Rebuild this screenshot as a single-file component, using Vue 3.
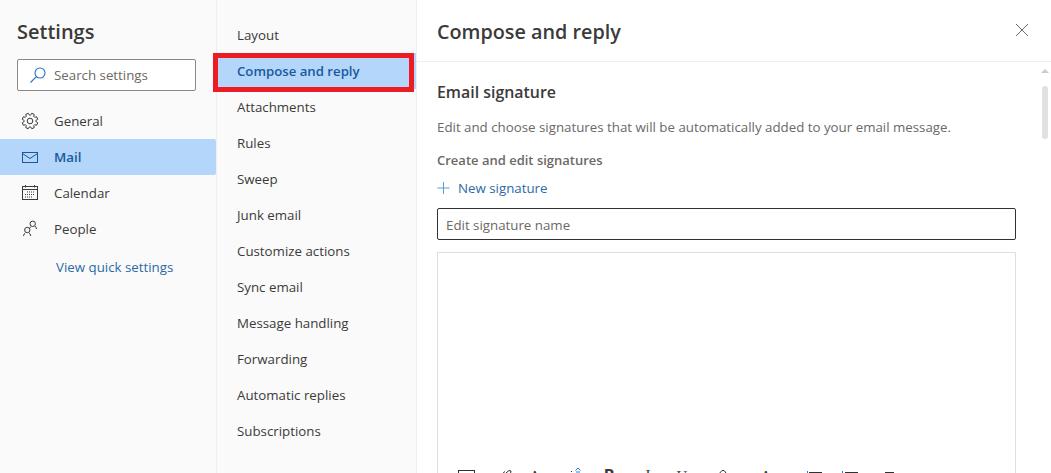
<script setup>
const mainNav = [
  { label: 'General', icon: 'gear' },
  { label: 'Mail', icon: 'mail', active: true },
  { label: 'Calendar', icon: 'calendar' },
  { label: 'People', icon: 'people' },
]
const subNav = ['Layout','Compose and reply','Attachments','Rules','Sweep','Junk email','Customize actions','Sync email','Message handling','Forwarding','Automatic replies','Subscriptions']

const gearPoints = (() => {
  const pts = []
  for (let i = 0; i < 8; i++) {
    const a = (i * Math.PI) / 4 + Math.PI / 8
    for (const [r, d] of [[5.9, -0.3], [7.9, -0.17], [7.9, 0.17], [5.9, 0.3]]) {
      pts.push(`${(9 + r * Math.cos(a + d)).toFixed(2)},${(9 + r * Math.sin(a + d)).toFixed(2)}`)
    }
  }
  return pts.join(' ')
})()
</script>

<template>
  <div class="app">
    <aside class="left">
      <h1 class="title">Settings</h1>
      <div class="search">
        <svg class="search-icon" width="16" height="16" viewBox="0 0 16 16" fill="none" stroke="#1f74c4" stroke-width="1.100">
          <circle cx="10" cy="6" r="5"/><path d="M6.400 9.600.500 15.500"/>
        </svg>
        <span>Search settings</span>
      </div>
      <nav>
        <div v-for="item in mainNav" :key="item.label" class="main-item" :class="{ active: item.active }">
          <svg class="main-icon" width="18" height="18" viewBox="0 0 18 18" fill="none" stroke="currentColor" stroke-width="1">
            <template v-if="item.icon === 'gear'">
              <circle cx="9" cy="9" r="2.800"/>
              <polygon :points="gearPoints"/>
            </template>
            <template v-else-if="item.icon === 'mail'">
              <rect x="1.500" y="4.500" width="15" height="10"/><path d="m1.500 5.500 7.500 5 7.500-5"/>
            </template>
            <template v-else-if="item.icon === 'calendar'">
              <rect x="1.500" y="2.500" width="15" height="13"/><path d="M1.500 5.500h15M4.500 1v2.500M13.500 1v2.500"/>
              <path d="M6 8h8M4 10.500h10M4 13h8" stroke-dasharray="1 1"/>
            </template>
            <template v-else>
              <circle cx="11.700" cy="3.800" r="2.700"/><circle cx="6.300" cy="10" r="2.700"/>
              <path d="M2.500 16c.2-1.500.8-2.600 1.900-3.200M9.800 16c-.2-1.500-.8-2.600-1.900-3.200M8.600 8.200l1.300-1.600M14 6c.8.600 1.300 1.600 1.500 3"/>
            </template>
          </svg>
          <span>{{ item.label }}</span>
        </div>
      </nav>
      <a class="quick">View quick settings</a>
    </aside>

    <nav class="middle">
      <div v-for="label in subNav" :key="label" class="sub-item" :class="{ selected: label === 'Compose and reply' }">
        {{ label }}
        <span v-if="label === 'Compose and reply'" class="marker"></span>
      </div>
    </nav>

    <main class="panel">
      <header class="panel-head">
        <h2>Compose and reply</h2>
        <svg width="12" height="12" viewBox="0 0 12 12" stroke="#6b6966" stroke-width="1" fill="none"><path d="m0 0 12 12M12 0 0 12"/></svg>
      </header>
      <section class="body">
        <h3>Email signature</h3>
        <p class="desc">Edit and choose signatures that will be automatically added to your email message.</p>
        <h4>Create and edit signatures</h4>
        <div class="new-sig">
          <svg width="14" height="14" viewBox="0 0 14 14" stroke="#5a9bd8" stroke-width="1" fill="none"><path d="M6.500 1v12M.500 7h12"/></svg>
          <span>New signature</span>
        </div>
        <div class="name-input">Edit signature name</div>
        <div class="editor">
          <div class="toolbar">
            <svg width="18" height="18" viewBox="0 0 18 18" fill="none" stroke="#323130"><rect x=".500" y="3.500" width="16" height="12"/></svg>
            <svg class="t1" width="18" height="18" viewBox="0 0 18 18" fill="none" stroke="#323130"><path d="m6 7 3-2.500M10 6l3-2.500 2 .500-.500 2.500-3 2"/></svg>
            <span class="tool-glyph t2">A</span>
            <svg class="t3" width="18" height="18" viewBox="0 0 18 18" fill="none" stroke="#2b7cd3"><path d="M7.500 3.500 10 1l2.500 2.500M8 5h4"/><path d="M3 4.500h1" stroke="#323130"/></svg>
            <b class="tool-glyph t4">B</b>
            <i class="tool-glyph t5">I</i>
            <span class="tool-glyph t6">U</span>
            <svg class="t7" width="18" height="18" viewBox="0 0 18 18" fill="none" stroke="#323130"><path d="M5 8 9 3.500h2L13 6"/></svg>
            <span class="tool-glyph t8">A</span>
            <svg class="t9" width="18" height="18" viewBox="0 0 18 18" fill="none"><path d="M4 5.500h13" stroke="#323130"/><path d="M2.500 4v2" stroke="#2b7cd3"/></svg>
            <svg class="t10" width="18" height="18" viewBox="0 0 18 18" fill="none"><path d="M4 5.500h13" stroke="#323130"/><path d="M1.500 4v2" stroke="#2b7cd3"/></svg>
            <svg class="t11" width="18" height="18" viewBox="0 0 18 18" fill="none"><path d="M5 5.500h9" stroke="#323130"/></svg>
          </div>
        </div>
      </section>
      <div class="scrollbar">
        <span class="arrow"></span>
        <span class="thumb"></span>
      </div>
    </main>
  </div>
</template>

<style>
html, body { margin: 0; overflow: hidden; background: #fff; }
</style>

<style scoped>
.app {
  display: flex;
  height: 473px;
  width: 1051px;
  overflow: hidden;
  font-family: "Open Sans", "Noto Sans", sans-serif;
  font-size: 13.300px;
  color: #3b3a39;
}
.left {
  flex: none;
  background: #fafafa;
  box-sizing: border-box;
  border-right: 1px solid #eeeeee;
  width: 217px;
}
.title {
  margin: 0;
  padding: 18px 0 0 17px;
  height: 41px;
  box-sizing: border-box;
  font-size: 20px;
  line-height: 28px;
  font-weight: 600;
}
.search {
  margin: 18px 20px 12px 17px;
  height: 32px;
  box-sizing: border-box;
  width: 179px;
  border: 1px solid #8a8886;
  border-radius: 2px;
  background: #fff;
  display: flex;
  align-items: center;
  padding-left: 12px;
  gap: 8px;
  color: #6b6966;
}
.search-icon { flex: none; }
.main-item {
  height: 36px;
  display: flex;
  align-items: center;
  padding-left: 21px;
  gap: 15px;
}
.main-item.active {
  background: #b3d6fa;
  color: #185a9d;
  font-weight: 600;
  border-radius: 0 2px 2px 0;
}
.main-icon { flex: none; }
.quick {
  display: block;
  margin: 9px 0 0 56px;
  line-height: 22px;
  color: #2b6aa8;
}
.middle {
  width: 200px;
  flex: none;
  box-sizing: border-box;
  background: #fafafa;
  border-right: 1px solid #eeeeee;
  padding-top: 17px;
}
.sub-item {
  height: 36px;
  line-height: 36px;
  padding-left: 20px;
  position: relative;
}
.sub-item.selected {
  background: #b3d6fa;
  color: #185a9d;
  font-weight: 600;
  font-size: 13.200px;
}
.marker {
  position: absolute;
  left: -4px;
  top: 0;
  width: 201px;
  height: 39px;
  box-sizing: border-box;
  border: 5px solid #ed1c24;
}
.panel {
  flex: 1;
  min-width: 0;
  position: relative;
  background: #fff;
}
.panel-head {
  height: 62px;
  box-sizing: border-box;
  border-bottom: 1px solid #eeeeee;
  display: flex;
  align-items: center;
  justify-content: space-between;
  padding: 0 23px 0 20px;
}
.panel-head svg { margin-bottom: 2px; }
.panel-head h2 {
  margin: 3px 0 0;
  font-size: 19.800px;
  line-height: 28px;
  font-weight: 600;
}
.body { padding: 19px 35px 0 20px; }
h3 {
  margin: 0;
  font-size: 15.900px;
  line-height: 22px;
  font-weight: 600;
}
.desc {
  margin: 14px 0 0;
  line-height: 20px;
  color: #6b6966;
  font-size: 13.300px;
}
h4 {
  margin: 13px 0 0;
  font-size: 13px;
  line-height: 20px;
  font-weight: 600;
  color: #6b6966;
}
.new-sig {
  margin-top: 8px;
  height: 20px;
  display: flex;
  align-items: center;
  gap: 7px;
  color: #2b6aa8;
}
.name-input {
  margin-top: 10px;
  height: 32px;
  box-sizing: border-box;
  border: 1px solid #323130;
  border-radius: 2px;
  padding-left: 8px;
  line-height: 32px;
  color: #6b6966;
}
.editor {
  margin-top: 12px;
  height: 300px;
  box-sizing: border-box;
  border: 1px solid #e1dfdd;
  position: relative;
}
.toolbar {
  position: absolute;
  left: 20px;
  top: 214px;
  display: flex;
  align-items: flex-start;
}
.toolbar svg, .tool-glyph { flex: none; }
.tool-glyph {
  width: 18px;
  line-height: 18px;
  text-align: center;
  font-size: 15px;
  font-style: normal;
  font-family: "Liberation Serif", serif;
}
.t1 { margin-left: 20px; }
.t2 { margin-left: 12px; }
.t3 { margin-left: 24px; }
.t4 { margin-left: 14px; margin-top: -1px; font-size: 16px; font-family: "Open Sans", sans-serif; font-weight: 700; }
.t5 { margin-left: 21px; margin-top: -1px; }
.t6 { margin-left: 16px; }
.t7 { margin-left: 22px; }
.t8 { margin-left: 26px; }
.t9 { margin-left: 30px; }
.t10 { margin-left: 18px; }
.t11 { margin-left: 21px; }
.scrollbar {
  position: absolute;
  right: 2px;
  top: 69px;
  width: 8px;
  display: flex;
  flex-direction: column;
  align-items: center;
}
.arrow {
  width: 0;
  height: 0;
  border-left: 4px solid transparent;
  border-right: 4px solid transparent;
  border-bottom: 4px solid #c8cdcf;
}
.thumb {
  margin-top: 13px;
  width: 6px;
  height: 53px;
  border-radius: 3px;
  background: #e1e1e1;
}
</style>
